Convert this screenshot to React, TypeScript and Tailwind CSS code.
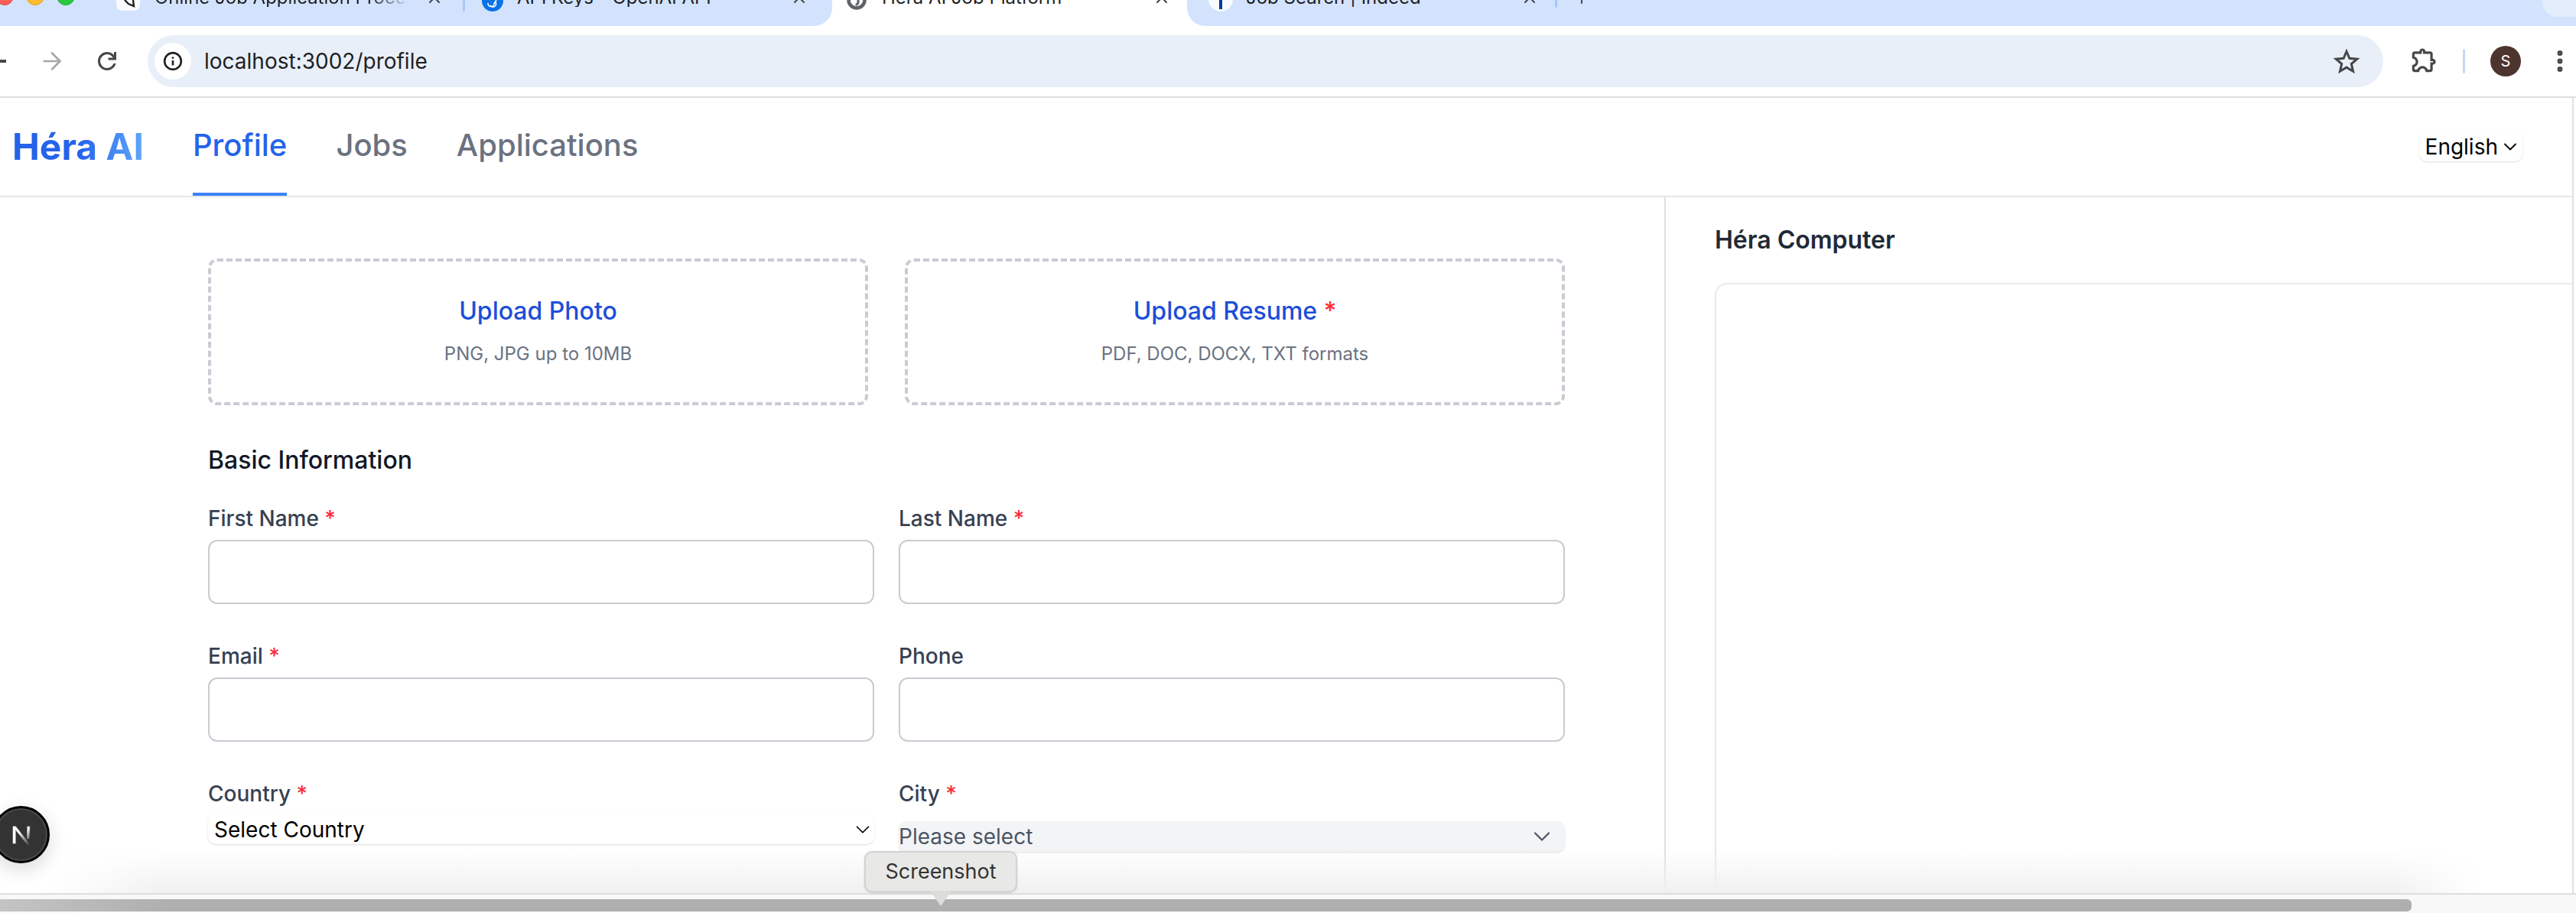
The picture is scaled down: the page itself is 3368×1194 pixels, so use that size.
import React from "react";
import { ChevronDown, ArrowRight, X, EllipsisVertical, Plus } from "lucide-react";

const Req = () => <span className="text-red-500"> *</span>;

function Field({ label, req }: { label: string; req?: boolean }) {
  return (
    <div className="flex flex-col">
      <label className="h-[40px] text-[28px] leading-[40px] font-medium text-[#374151]">
        {label}
        {req && <Req />}
      </label>
      <div className="mt-[8px] h-[84px] rounded-[12px] border-2 border-[#c8cbd1] bg-white" />
    </div>
  );
}

function Upload({ title, sub, req }: { title: string; sub: string; req?: boolean }) {
  return (
    <div className="flex h-[192px] flex-1 flex-col items-center justify-center rounded-[12px] border-4 border-dashed border-[#c9ccd3] pb-[6px]">
      <div className="text-[32px] leading-[48px] font-medium text-[#1d4ed8]">
        {title}
        {req && <Req />}
      </div>
      <div className="mt-[16px] text-[24px] leading-[32px] text-[#6b7280]">{sub}</div>
    </div>
  );
}

const tabText = "overflow-hidden whitespace-nowrap text-[24px] leading-[24px] text-[#1f1f1f]";
const tabX = "h-[24px] w-[24px] shrink-0 text-[#444746]";

export default function App() {
  return (
    <div className="flex h-[1194px] w-[3368px] flex-col overflow-hidden bg-white font-['Inter','Liberation_Sans',sans-serif]">
      {/* tab strip */}
      <div className="flex h-[34px] shrink-0 items-stretch bg-white">
        <div className="flex w-[1088px] shrink-0 items-start rounded-br-[24px] bg-[#d3e3fd]">
          <div className="-mt-[17px] -ml-[6px] flex w-[146px] shrink-0 gap-[16px]">
            <span className="h-[24px] w-[24px] rounded-full border border-[#e0443e] bg-[#ff5f57]" />
            <span className="h-[24px] w-[24px] rounded-full border border-[#dea123] bg-[#febc2e]" />
            <span className="h-[24px] w-[24px] rounded-full border border-[#1aab29] bg-[#28c840]" />
          </div>
          <div className="-mt-[15px] flex items-start">
            <svg width="31" height="14" viewBox="0 0 31 14" className="mt-[15px] ml-[12px] shrink-0">
              <path d="M0 0h31v6a8 8 0 0 1-8 8H8a8 8 0 0 1-8-8z" fill="#f8fafe" />
              <path d="M11 0l5 5 7 3-1-8" fill="none" stroke="#222222" strokeWidth="2.4" />
            </svg>
            <span className={`${tabText} ml-[19px] w-[333px] [mask-image:linear-gradient(to_right,black_84%,transparent)]`}>
              Online Job Application Process
            </span>
            <X className={`${tabX} ml-[21px]`} />
            <span className="mt-[15px] ml-[25px] h-[15px] w-[3px] rounded-b-[2px] bg-[#a8c7fa]" />
            <svg width="28" height="15" viewBox="0 0 28 15" className="mt-[15px] ml-[22px] shrink-0">
              <circle cx="14" cy="1" r="14" fill="#0b72e7" />
              <path d="M8 4a4 4 0 0 0 8 1l3-5M11 7a4 4 0 0 0 7-4" fill="none" stroke="#ffffff" strokeWidth="1.6" />
            </svg>
            <span className={`${tabText} ml-[18px] w-[350px]`}>API Keys - OpenAI API</span>
            <X className={`${tabX} ml-[7px]`} />
          </div>
        </div>

        <div className="flex w-[464px] shrink-0 items-start bg-white">
          <div className="-mt-[15px] flex items-start">
            <svg width="26" height="13" viewBox="0 0 26 13" className="mt-[15px] ml-[19px] shrink-0">
              <circle cx="13" cy="0" r="10.5" fill="#ffffff" stroke="#5f6368" strokeWidth="4.5" />
              <path d="M15 0v4l-3 3" fill="none" stroke="#5f6368" strokeWidth="3" />
            </svg>
            <span className={`${tabText} ml-[20px] w-[340px]`}>Héra AI Job Platform</span>
            <X className={`${tabX} ml-[14px]`} />
          </div>
        </div>

        <div className="flex flex-1 items-start justify-between rounded-bl-[24px] bg-[#d3e3fd]">
          <div className="-mt-[15px] flex items-start">
            <svg width="32" height="15" viewBox="0 0 32 15" className="mt-[15px] ml-[28px] shrink-0">
              <circle cx="16" cy="-1" r="16" fill="#f8fafe" />
              <rect x="14" y="0" width="4" height="12" fill="#003a9b" />
            </svg>
            <span className={`${tabText} ml-[17px] w-[340px]`}>Job Search | Indeed</span>
            <X className={`${tabX} ml-[19px]`} />
            <span className="mt-[15px] ml-[21px] h-[10px] w-[3px] rounded-b-[2px] bg-[#a8c7fa]" />
            <Plus className={`${tabX} ml-[20px]`} />
          </div>
          <div className="h-[22px] w-[44px] rounded-bl-[20px] bg-[#e4edfb]" />
        </div>
      </div>

      {/* toolbar */}
      <div className="flex h-[94px] shrink-0 items-center border-b-2 border-[#dedede] bg-white">
        <div className="flex w-[193px] shrink-0 items-center">
          <div className="h-[4px] w-[8px] bg-[#474747]" />
          <ArrowRight className="ml-[42px] h-[36px] w-[36px] text-[#a8a8a8]" strokeWidth={1.8} />
          <svg viewBox="0 0 24 24" className="ml-[36px] h-[36px] w-[36px] fill-[#474747]">
            <path d="M12 20q-3.35 0-5.675-2.325T4 12q0-3.35 2.325-5.675T12 4q1.725 0 3.3.712T18 6.65V4h2v7h-7V9h4.2q-.8-1.4-2.187-2.2T12 6Q9.5 6 7.75 7.75T6 12q0 2.5 1.75 4.25T12 18q1.925 0 3.475-1.1T17.65 14h2.1q-.7 2.65-2.85 4.325T12 20Z" />
          </svg>
        </div>
        <div className="flex h-[68px] w-[2923px] shrink-0 items-center rounded-full bg-[#e8eff9] pl-[9px] pr-[30px]">
          <div className="flex h-[48px] w-[48px] items-center justify-center rounded-full bg-white">
            <svg viewBox="0 0 24 24" className="h-[26px] w-[26px] text-[#1f1f1f]" fill="none" stroke="currentColor" strokeWidth="2.4">
              <circle cx="12" cy="12" r="10" />
              <path d="M12 11v6M12 7v2" />
            </svg>
          </div>
          <span className="ml-[17px] flex-1 text-[28px] text-[#1f1f1f]">localhost:3002/profile</span>
          <svg viewBox="0 0 24 24" className="h-[36px] w-[36px] text-[#474747]" fill="none" stroke="currentColor" strokeWidth="2">
            <path d="M12 3.5l2.6 6 6.6.6-5 4.3 1.5 6.4-5.7-3.4-5.7 3.4 1.5-6.4-5-4.3 6.6-.6z" />
          </svg>
        </div>
        <svg viewBox="0 0 24 24" className="ml-[33px] h-[38px] w-[38px] shrink-0 fill-[#474747]">
          <path d="M8.8 21H5q-.825 0-1.412-.587T3 19v-3.8q1.2 0 2.1-.762T6 12.5q0-1.175-.9-1.937T3 9.8V6q0-.825.588-1.412T5 4h4q0-1.05.725-1.775T11.5 1.5q1.05 0 1.775.725T14 4h4q.825 0 1.413.588T20 6v4q1.05 0 1.775.725T22.5 12.5q0 1.05-.725 1.775T20 15v4q0 .825-.587 1.413T18 21h-3.8q0-1.25-.787-2.125T11.5 18q-1.125 0-1.912.875T8.8 21ZM5 19h2.125q.6-1.65 1.925-2.325T11.5 16q1.125 0 2.45.675T15.875 19H18v-6h2q.2 0 .35-.15t.15-.35q0-.2-.15-.35T20 12h-2V6h-6V4q0-.2-.15-.35T11.5 3.5q-.2 0-.35.15T11 4v2H5v2.2q1.35.5 2.175 1.675T8 12.5q0 1.425-.825 2.6T5 16.8V19Z" />
        </svg>
        <div className="ml-[33px] h-[32px] w-[3px] rounded-full bg-[#c4d7f5]" />
        <div className="ml-[33px] flex h-[40px] w-[40px] shrink-0 items-center justify-center rounded-full bg-[#4e342e] text-[20px] text-white">S</div>
        <EllipsisVertical className="ml-[33px] h-[36px] w-[36px] shrink-0 text-[#474747]" strokeWidth={2.6} />
      </div>

      {/* page */}
      <div className="mr-[3px] flex min-h-0 flex-1 flex-col border-r-2 border-[#e0e0e0]">
        <div className="flex h-[130px] shrink-0 items-stretch justify-between border-b-2 border-[#e5e7eb]">
          <div className="flex items-stretch">
            <div className="ml-[16px] flex items-center bg-gradient-to-r from-[#2563eb] from-50% to-[#60a5fa] bg-clip-text text-[48px] font-bold text-transparent">
              Héra AI
            </div>
            <div className="ml-[64px] flex items-center border-b-4 border-[#3b82f6] text-[40px] font-medium text-[#2563eb]">Profile</div>
            <div className="ml-[64px] flex items-center pb-[4px] text-[40px] font-medium text-[#6b7280]">Jobs</div>
            <div className="ml-[64px] flex items-center pb-[4px] text-[40px] font-medium text-[#6b7280]">Applications</div>
          </div>
          <div className="mr-[65px] flex items-center">
            <div className="flex h-[38px] items-center gap-[2px] rounded-[10px] bg-white pl-[8px] pr-[2px] text-[28px] text-black shadow-sm">
              English
              <ChevronDown className="h-[28px] w-[28px]" strokeWidth={1.6} />
            </div>
          </div>
        </div>

        <div className="relative flex min-h-0 flex-1">
          <div className="w-[2178px] shrink-0 border-r-2 border-[#e0e0e4] pl-[272px] pt-[80px]">
            <div className="flex w-[1774px] gap-[48px]">
              <Upload title="Upload Photo" sub="PNG, JPG up to 10MB" />
              <Upload title="Upload Resume" sub="PDF, DOC, DOCX, TXT formats" req />
            </div>
            <div className="mt-[48px] text-[32px] leading-[48px] font-medium text-[#111827]">Basic Information</div>
            <div className="mt-[32px] grid w-[1774px] grid-cols-2 gap-x-[32px] gap-y-[48px]">
              <Field label="First Name" req />
              <Field label="Last Name" req />
              <Field label="Email" req />
              <Field label="Phone" />
              <div className="flex flex-col">
                <label className="h-[40px] text-[28px] leading-[40px] font-medium text-[#374151]">
                  Country
                  <Req />
                </label>
                <div className="mt-[8px] flex h-[38px] items-center justify-between rounded-[10px] bg-white pl-[8px] text-[28px] text-black shadow-sm">
                  Select Country
                  <ChevronDown className="h-[30px] w-[30px]" strokeWidth={1.4} />
                </div>
              </div>
              <div className="flex flex-col">
                <label className="h-[40px] text-[28px] leading-[40px] font-medium text-[#374151]">
                  City
                  <Req />
                </label>
                <div className="mt-[16px] flex h-[40px] items-center justify-between rounded-[10px] bg-[#f3f4f6] pr-[12px] text-[28px] text-[#4b5563] shadow-sm">
                  Please select
                  <ChevronDown className="h-[36px] w-[36px] text-[#4b5563]" strokeWidth={1.5} />
                </div>
              </div>
            </div>
          </div>
          <div className="min-w-0 flex-1 overflow-hidden pl-[64px] pt-[32px]">
            <div className="text-[32px] leading-[48px] font-semibold text-[#1f2937]">Héra Computer</div>
            <div className="mt-[32px] h-[900px] w-[1300px] rounded-t-[16px] border-2 border-[#e8e9ed]" />
          </div>

          {/* dock shadow */}
          <div className="pointer-events-none absolute inset-x-0 bottom-0 h-[56px] bg-gradient-to-b from-transparent to-[#f0f0f0] [mask-image:linear-gradient(to_right,transparent_60px,black_220px,black_3120px,transparent_3240px)]" />
        </div>
      </div>

      {/* window bottom + scrollbar */}
      <div className="flex h-[26px] shrink-0 items-end border-t-2 border-[#dedede] bg-[#f8f8f8] pb-[2px]">
        <div className="h-[16px] w-[3153px] rounded-r-[6px] bg-[linear-gradient(to_right,#c4c4c4,#afafaf_220px)]" />
      </div>

      {/* Next badge */}
      <div className="absolute left-[-10px] top-[1054px] flex h-[75px] w-[75px] items-center justify-center rounded-full border-[3px] border-black bg-[#333333] shadow-[0_0_0_2px_#4a4a4a_inset,0_8px_24px_rgba(0,0,0,0.15)]">
        <svg viewBox="0 0 32 32" className="h-[40px] w-[40px]">
          <defs>
            <linearGradient id="ng" x1="0.3" y1="0.3" x2="0.9" y2="1">
              <stop offset="0" stopColor="#ffffff" />
              <stop offset="1" stopColor="#ffffff" stopOpacity="0" />
            </linearGradient>
          </defs>
          <path d="M7 7h3v18H7z" fill="#ffffff" />
          <path d="M7 7h3.2L26 27h-3.4z" fill="url(#ng)" />
          <path d="M22 7h3v13h-3z" fill="url(#ng)" />
        </svg>
      </div>

      {/* Screenshot tooltip */}
      <div className="absolute left-[1130px] top-[1113px] flex h-[54px] w-[200px] items-center justify-center rounded-[10px] border-2 border-[#d2d2d0] bg-[#e8e8e6] text-[27px] text-[#333333] shadow-sm">
        Screenshot
        <div className="absolute bottom-[-20px] left-1/2 h-0 w-0 -translate-x-1/2 border-x-[14px] border-t-[20px] border-x-transparent border-t-[#dcdcda]" />
      </div>
    </div>
  );
}
